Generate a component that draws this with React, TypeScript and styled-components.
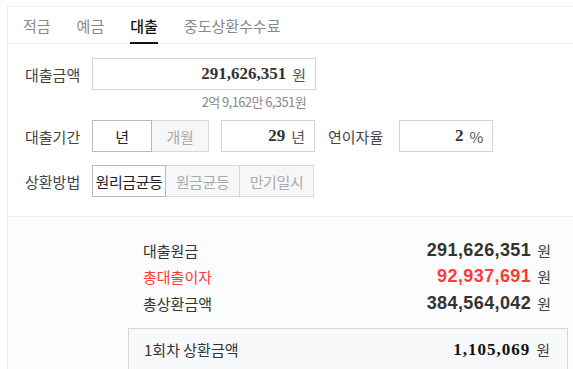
import { styled, createGlobalStyle } from 'styled-components';

const GlobalStyle = createGlobalStyle`
  html, body {
    margin: 0;
    padding: 0;
    background: #fff;
    overflow: hidden;
  }
  body {
    font-family: 'Noto Sans CJK KR', 'Noto Sans', sans-serif;
    color: #333;
  }
`;

const tabs = ['적금', '예금', '대출', '중도상환수수료'];

const results = [
  { label: '대출원금', value: '291,626,351', red: false },
  { label: '총대출이자', value: '92,937,691', red: true },
  { label: '총상환금액', value: '384,564,042', red: false },
];

function App() {
  return (
    <>
      <GlobalStyle />
      <Panel>
        <TabBar>
          {tabs.map((tab) => (
            <Tab key={tab} $active={tab === '대출'}>
              {tab}
            </Tab>
          ))}
        </TabBar>

        <FormSection>
          <Row>
            <Label>대출금액</Label>
            <InputBox $width={224}>
              <Amount>291,626,351</Amount>
              <Unit>원</Unit>
            </InputBox>
          </Row>
          <SubText>2억 9,162만 6,351원</SubText>

          <Row>
            <Label>대출기간</Label>
            <SegGroup>
              <SegButton $active $width={60}>
                년
              </SegButton>
              <SegButton $width={57}>개월</SegButton>
            </SegGroup>
            <InputBox $width={94} $gap={12}>
              <Amount>29</Amount>
              <Unit>년</Unit>
            </InputBox>
            <InlineLabel>연이자율</InlineLabel>
            <InputBox $width={94}>
              <Amount>2</Amount>
              <Unit>%</Unit>
            </InputBox>
          </Row>

          <Row $top={13}>
            <Label>상환방법</Label>
            <SegGroup>
              <SegButton $active $width={74}>
                원리금균등
              </SegButton>
              <SegButton $width={74}>원금균등</SegButton>
              <SegButton $width={74}>만기일시</SegButton>
            </SegGroup>
          </Row>
        </FormSection>

        <ResultSection>
          <ResultList>
            {results.map((r) => (
              <ResultRow key={r.label} $red={r.red}>
                <ResultLabel>{r.label}</ResultLabel>
                <ResultValue>
                  <BigNumber>{r.value}</BigNumber>
                  <ResultUnit>원</ResultUnit>
                </ResultValue>
              </ResultRow>
            ))}
          </ResultList>

          <FirstPayBox>
            <ResultLabel>1회차 상환금액</ResultLabel>
            <ResultValue>
              <SerifNumber>1,105,069</SerifNumber>
              <ResultUnit>원</ResultUnit>
            </ResultValue>
          </FirstPayBox>
        </ResultSection>
      </Panel>
    </>
  );
}

const Panel = styled.div`
  margin: 6px 0 0 7px;
  width: 620px;
  border-left: 1px solid #ececec;
  border-top: 1px solid #ececec;
  background: #fff;
`;

const TabBar = styled.div`
  display: flex;
  gap: 26px;
  height: 36px;
  padding-left: 15px;
  border-bottom: 1px solid #ececec;
`;

const Tab = styled.div<{ $active?: boolean }>`
  display: flex;
  align-items: center;
  font-size: 15px;
  color: ${({ $active }) => ($active ? '#111' : '#888')};
  font-weight: ${({ $active }) => ($active ? 500 : 400)};
  border-bottom: 2px solid ${({ $active }) => ($active ? '#111' : 'transparent')};
  margin-bottom: -1px;
  padding-top: 2px;
  box-sizing: border-box;
`;

const FormSection = styled.div`
  padding: 14px 0 19px 17px;
  border-bottom: 1px solid #ececec;
`;

const Row = styled.div<{ $top?: number }>`
  display: flex;
  align-items: center;
  margin-top: ${({ $top }) => $top ?? 0}px;
`;

const Label = styled.div`
  width: 67px;
  flex-shrink: 0;
  font-size: 15px;
  color: #444;
`;

const InlineLabel = styled.div`
  font-size: 15px;
  color: #444;
  margin: 0 16px 0 13px;
`;

const InputBox = styled.div<{ $width: number; $gap?: number }>`
  display: flex;
  align-items: center;
  justify-content: flex-end;
  gap: 6px;
  width: ${({ $width }) => $width}px;
  height: 32px;
  box-sizing: border-box;
  padding-right: 9px;
  border: 1px solid #d4d4d4;
  background: #fff;
  margin-left: ${({ $gap }) => $gap ?? 0}px;
`;

const Amount = styled.span`
  font-family: 'Liberation Serif', serif;
  font-weight: 700;
  font-size: 17px;
  color: #333;
`;

const Unit = styled.span`
  font-size: 15px;
  color: #555;
`;

const SubText = styled.div`
  width: 281px;
  text-align: right;
  margin: 4px 0 10px;
  font-size: 13px;
  line-height: 16px;
  letter-spacing: -0.6px;
  color: #888;
`;

const SegGroup = styled.div`
  display: flex;
`;

const SegButton = styled.div<{ $active?: boolean; $width: number }>`
  display: flex;
  align-items: center;
  justify-content: center;
  width: ${({ $width }) => $width}px;
  height: 32px;
  box-sizing: border-box;
  font-size: 15px;
  letter-spacing: -0.4px;
  white-space: nowrap;
  color: ${({ $active }) => ($active ? '#222' : '#aaa')};
  background: ${({ $active }) => ($active ? '#fff' : '#f6f7f9')};
  border: 1px solid ${({ $active }) => ($active ? '#b9b9b9' : '#d9d9d9')};

  & + & {
    border-left: none;
  }
`;

const ResultSection = styled.div`
  background: #fcfcfc;
  padding: 20px 0 0 120px;
  height: 200px;
`;

const ResultList = styled.div`
  width: 440px;
  box-sizing: border-box;
  padding: 0 17px 0 15px;
`;

const ResultRow = styled.div<{ $red?: boolean }>`
  display: flex;
  align-items: center;
  justify-content: space-between;
  height: 26.5px;
  color: ${({ $red }) => ($red ? '#ff3a3a' : '#333')};
`;

const ResultLabel = styled.div`
  font-size: 15px;
`;

const ResultValue = styled.div`
  display: flex;
  align-items: center;
  gap: 6px;
`;

const BigNumber = styled.span`
  font-family: 'Liberation Sans', Arial, sans-serif;
  font-weight: 700;
  font-size: 18px;
  letter-spacing: 0.4px;
`;

const SerifNumber = styled.span`
  font-family: 'Liberation Serif', serif;
  font-weight: 700;
  font-size: 17px;
  letter-spacing: 1px;
  color: #111;
`;

const ResultUnit = styled.span`
  font-size: 15px;
  color: #444;
`;

const FirstPayBox = styled.div`
  display: flex;
  align-items: center;
  justify-content: space-between;
  width: 440px;
  height: 44px;
  box-sizing: border-box;
  margin-top: 11px;
  padding: 0 17px 0 15px;
  border: 1px solid #d6d6d6;
  background: #f8f9fa;
  color: #333;
`;

export default App;
